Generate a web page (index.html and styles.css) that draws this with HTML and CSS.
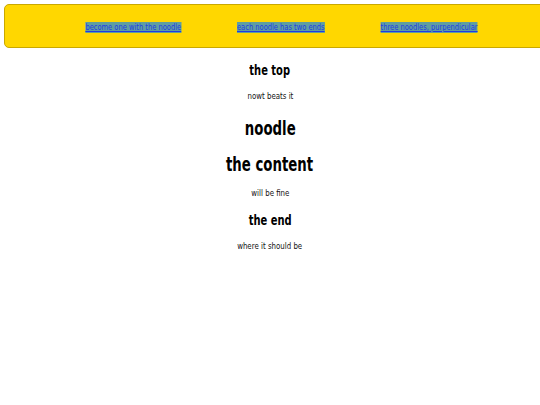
FILE: index.html
```html
<!DOCTYPE html>
<html>
<head>
<meta charset="utf-8">
<link rel="stylesheet" href="styles.css">
</head>
<body>
<nav class="bar">
  <div class="nav-cell"><a href="#" class="nav-link">become one with the noodle</a></div>
  <div class="nav-cell"><a href="#" class="nav-link">each noodle has two ends</a></div>
  <div class="nav-cell"><a href="#" class="nav-link">three noodles, purpendicular</a></div>
</nav>
<main class="content">
  <h2 class="small-head">the top</h2>
  <p class="note">nowt beats it</p>
  <h1 class="big-head first">noodle</h1>
  <h1 class="big-head">the content</h1>
  <p class="note">will be fine</p>
  <h2 class="small-head">the end</h2>
  <p class="note">where it should be</p>
</main>
</body>
</html>
```
FILE: styles.css
```css
html, body {
  margin: 0;
  padding: 0;
  background: #ffffff;
  font-family: "DejaVu Sans", sans-serif;
  color: #000;
  overflow: hidden;
}
.bar {
  margin: 4px -20px 0 4px;
  height: 42px;
  background: #ffd700;
  border: 1px solid #c9a800;
  border-radius: 5px;
  display: grid;
  grid-template-columns: repeat(3, 148px);
  align-items: center;
  padding-left: 54px;
}
.nav-cell {
  display: flex;
  justify-content: center;
  padding-top: 3px;
}
.nav-link {
  display: block;
  font-size: 9px;
  color: #1f3ae6;
  background: #5f9ea0;
  text-decoration: underline;
  line-height: 11px;
  white-space: nowrap;
  transform: scaleX(0.745);
}
.content {
  display: flex;
  flex-direction: column;
  align-items: center;
  padding-top: 13px;
  gap: 12px;
}
.small-head {
  font-size: 14px;
  font-weight: bold;
  margin: 0;
  line-height: 18px;
  transform: scaleX(0.71);
}
.big-head {
  font-size: 20px;
  font-weight: bold;
  margin: 0;
  line-height: 24px;
  transform: scaleX(0.665);
}
.big-head.first {
  margin-top: 1.5px;
}
.note {
  font-size: 9px;
  margin: 0;
  line-height: 11px;
  color: #111;
  transform: scaleX(0.78);
}
```
